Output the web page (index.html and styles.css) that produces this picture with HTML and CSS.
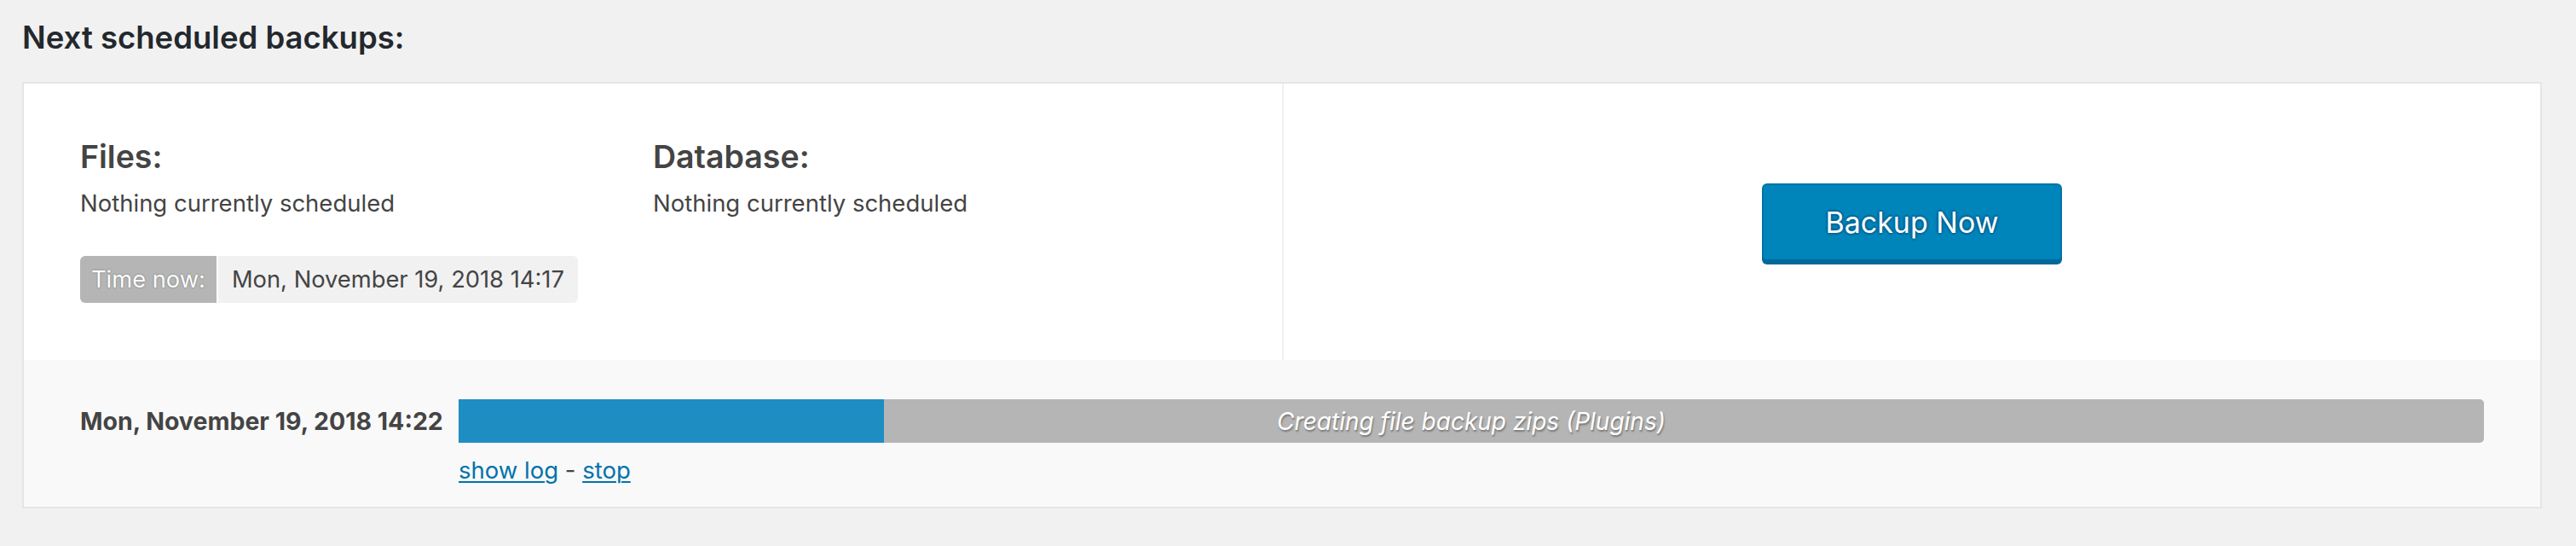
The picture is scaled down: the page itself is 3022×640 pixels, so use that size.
FILE: index.html
```html
<!DOCTYPE html>
<html lang="en">
<head>
<meta charset="utf-8">
<title>Next scheduled backups</title>
<link rel="stylesheet" href="styles.css">
</head>
<body>
<h2 class="page-title">Next scheduled backups:</h2>
<div class="card">
  <div class="top">
    <div class="schedule">
      <div class="cols">
        <div class="col">
          <h3 class="col-title">Files:</h3>
          <p class="col-text">Nothing currently scheduled</p>
        </div>
        <div class="col">
          <h3 class="col-title">Database:</h3>
          <p class="col-text">Nothing currently scheduled</p>
        </div>
      </div>
      <div class="timenow">
        <span class="timenow-label">Time now:</span>
        <span class="timenow-value">Mon, November 19, 2018 14:17</span>
      </div>
    </div>
    <div class="action">
      <button class="btn-primary" type="button">Backup Now</button>
    </div>
  </div>
  <div class="bottom">
    <div class="job-date">Mon, November 19, 2018 14:22</div>
    <div class="job-main">
      <div class="progress">
        <div class="progress-fill" style="width:21%"></div>
        <div class="progress-text">Creating file backup zips (Plugins)</div>
      </div>
      <div class="job-links"><a href="#" class="link">show log</a> - <a href="#" class="link">stop</a></div>
    </div>
  </div>
</div>
</body>
</html>
```

FILE: styles.css
```css
html, body {
  margin: 0;
  padding: 0;
  background: #f1f1f1;
}

body {
  font-family: Inter, "Noto Sans", "Liberation Sans", sans-serif;
  color: #444;
  font-size: 27.5px;
}

.page-title {
  margin: 24px 0 32px 26px;
  font-size: 36.5px;
  line-height: 40px;
  font-weight: 600;
  color: #23282d;
}

.card {
  margin: 0 40px 0 26px;
  border: 2px solid #e5e5e5;
  background: #fff;
}

.top {
  display: flex;
  background: #fff;
}

.schedule {
  flex: 0 0 auto;
  width: 1344px;
  padding: 64px 66px 67px 66px;
  border-right: 2px solid #f1f1f1;
}

.cols {
  display: grid;
  grid-template-columns: 1fr 1fr;
}

.col-title {
  margin: 0;
  font-size: 37.5px;
  line-height: 44px;
  font-weight: 600;
  color: #444;
}

.col-text {
  margin: 14px 0 0 0;
  font-size: 27.5px;
  line-height: 36px;
}

.timenow {
  display: inline-flex;
  margin-top: 44px;
  height: 55px;
  gap: 2px;
  font-size: 27.3px;
}

.timenow-label {
  display: flex;
  align-items: center;
  padding: 0 13px;
  background: #b5b5b5;
  color: #fff;
  border-radius: 6px 0 0 6px;
  text-shadow: 0 0 2px rgba(0, 0, 0, 0.45);
}

.timenow-value {
  display: flex;
  align-items: center;
  padding: 0 16px 0 16px;
  background: #f1f1f1;
  border-radius: 0 6px 6px 0;
}

.action {
  flex: 1 1 auto;
  display: flex;
  align-items: center;
  justify-content: center;
}

.btn-primary {
  height: 91px;
  padding: 0 72px;
  font-family: inherit;
  font-size: 34px;
  color: #fff;
  background: #0085ba;
  border: 2px solid #0073aa;
  border-bottom-color: #006799;
  border-radius: 6px;
  box-shadow: 0 4px 0 #006799;
  text-shadow: 0 -2px 2px #006799, 2px 0 2px #006799, 0 2px 2px #006799, -2px 0 2px #006799;
  cursor: pointer;
}

.bottom {
  display: grid;
  grid-template-columns: 444px 1fr;
  padding: 46px 66px 25px 66px;
  background: #f9f9f9;
}

.job-date {
  font-size: 28.5px;
  line-height: 51px;
  font-weight: 700;
  color: #444;
  align-self: start;
}

.progress {
  display: grid;
  height: 51px;
  background: #b5b5b5;
  border-radius: 0 5px 5px 0;
  overflow: hidden;
}

.progress-fill {
  grid-area: 1 / 1;
  height: 100%;
  background: #1e8ec2;
}

.progress-text {
  grid-area: 1 / 1;
  align-self: center;
  justify-self: center;
  font-size: 28px;
  font-style: italic;
  color: #fff;
  text-shadow: 1px 2px 2px rgba(0, 0, 0, 0.35);
}

.job-links {
  margin-top: 14px;
  font-size: 27.5px;
  line-height: 36px;
  color: #444;
}

.link {
  color: #0073aa;
  text-decoration: underline;
  text-decoration-thickness: 2px;
  text-underline-offset: 3px;
}
```
